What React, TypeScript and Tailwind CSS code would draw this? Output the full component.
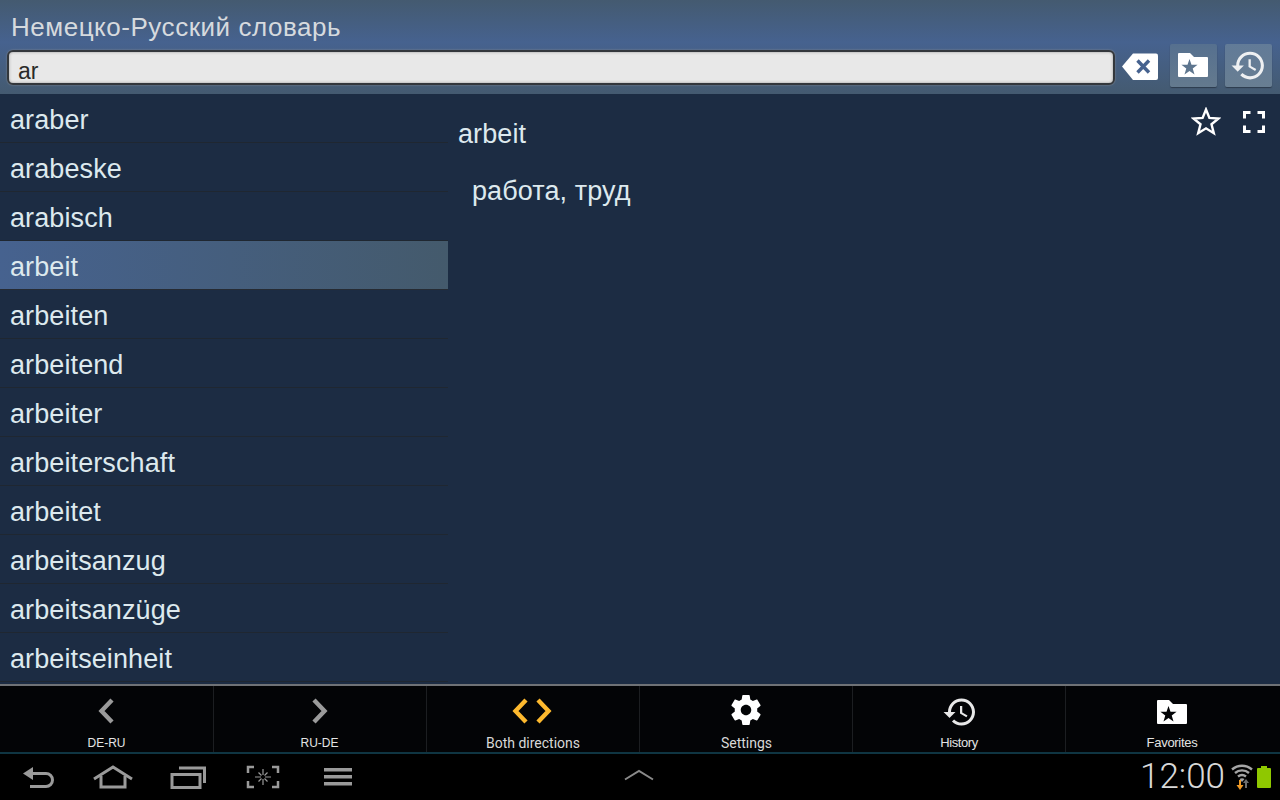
const HISTORY = "M13 3c-4.97 0-9 4.03-9 9H1l3.89 3.89.07.14L9 12H6c0-3.87 3.13-7 7-7s7 3.13 7 7-3.13 7-7 7c-1.93 0-3.68-.79-4.94-2.06l-1.42 1.42C8.27 19.99 10.51 21 13 21c4.97 0 9-4.03 9-9s-4.03-9-9-9zm-1 5v5l4.28 2.54.72-1.21-3.5-2.08V8H12z"
const GEAR = "M19.43 12.98c.04-.32.07-.64.07-.98s-.03-.66-.07-.98l2.11-1.65c.19-.15.24-.42.12-.64l-2-3.46c-.12-.22-.39-.3-.61-.22l-2.49 1c-.52-.4-1.08-.73-1.69-.98l-.38-2.65C14.46 2.18 14.25 2 14 2h-4c-.25 0-.46.18-.49.42l-.38 2.65c-.61.25-1.17.59-1.69.98l-2.49-1c-.23-.09-.49 0-.61.22l-2 3.46c-.13.22-.07.49.12.64l2.11 1.65c-.04.32-.07.65-.07.98s.03.66.07.98l-2.11 1.65c-.19.15-.24.42-.12.64l2 3.46c.12.22.39.3.61.22l2.49-1c.52.4 1.08.73 1.69.98l.38 2.65c.03.24.24.42.49.42h4c.25 0 .46-.18.49-.42l.38-2.65c.61-.25 1.17-.59 1.69-.98l2.49 1c.23.09.49 0 .61-.22l2-3.46c.12-.22.07-.49-.12-.64l-2.11-1.65zM12 15.5c-1.93 0-3.5-1.57-3.5-3.5s1.57-3.5 3.5-3.5 3.5 1.57 3.5 3.5-1.57 3.5-3.5 3.5z"
const FOLDER_STAR = "M1 0h11l4 4h13a1 1 0 0 1 1 1v18a1 1 0 0 1-1 1H1a1 1 0 0 1-1-1V1a1 1 0 0 1 1-1zM11.500 6L13.500 11.750 19.580 11.870 14.730 15.550 16.500 21.380 11.500 17.900 6.500 21.380 8.270 15.550 3.420 11.870 9.500 11.750z"

const words = ["araber", "arabeske", "arabisch", "arbeit", "arbeiten", "arbeitend", "arbeiter", "arbeiterschaft", "arbeitet", "arbeitsanzug", "arbeitsanzüge", "arbeitseinheit"]

function History({ className }: { className: string }) {
  return (
    <svg viewBox="0 0 24 24" className={className} fill="currentColor">
      <path d={HISTORY} />
    </svg>
  )
}

function FolderStar({ className }: { className: string }) {
  return (
    <svg viewBox="0 0 30 24" className={className} fill="currentColor" fillRule="evenodd">
      <path d={FOLDER_STAR} />
    </svg>
  )
}

function Tab({ children, label, labelClass }: { children: React.ReactNode, label: string, labelClass: string }) {
  return (
    <div className="w-[213px] first:w-[214px] last:w-[214px] flex flex-col items-center border-r border-[#1c1e21] last:border-r-0 h-[66px] overflow-hidden">
      <div className="h-[48px] flex items-center justify-center">{children}</div>
      <div className={labelClass}>{label}</div>
    </div>
  )
}

function App() {
  return (
    <div className="w-[1280px] h-[800px] flex flex-col overflow-hidden bg-[#1c2c43] font-['Liberation_Sans',sans-serif]">
      {/* title + search */}
      <div className="h-[94px] shrink-0 bg-gradient-to-b from-[#445a70] via-[#46628f] via-45% to-[#445a70] pl-[7px] pr-[8px]">
        <div className="h-[44px] pt-[11px] pl-[4px] text-[26px] leading-[32px] text-[#d6dade] tracking-[0.53px]">
          Немецко-Русский словарь
        </div>
        <div className="flex items-start">
          <div className="mt-[6px] w-[1108px] h-[35px] rounded-[6px] border-2 border-[#33373c] bg-[#e8e8e8] pl-[9px] text-[23px] leading-[38px] text-[#2a2a2a] shadow-[0_0_2px_#8a8f95,inset_0_0_3px_#999]">
            ar
          </div>
          <svg viewBox="0 0 36 27" className="w-[36px] h-[27px] ml-[7px] mt-[9px]" fillRule="evenodd">
            <path fill="#fff" d="M0 13.5L11 .5H34a2 2 0 0 1 2 2V25a2 2 0 0 1-2 2H11z" />
            <path stroke="#46628f" strokeWidth="3.4" d="M15.5 7.5l11.5 12M27 7.5l-11.5 12" />
          </svg>
          <div className="ml-[12px] w-[47px] h-[43px] rounded-[2px] bg-gradient-to-b from-[#56708f] to-[#647a8e] shadow-[0_1px_1px_#2d3b4d] flex items-center justify-center text-white">
            <FolderStar className="w-[30px] h-[24px] -mt-[1px] -ml-[1px]" />
          </div>
          <div className="ml-[8px] w-[47px] h-[43px] rounded-[2px] bg-gradient-to-b from-[#627b98] to-[#687e92] shadow-[0_1px_1px_#2d3b4d] flex items-center justify-center text-[#eef0f2]">
            <History className="w-[37px] h-[37px]" />
          </div>
        </div>
      </div>

      {/* list + article */}
      <div className="flex h-[590px] shrink-0">
        <div className="w-[448px] shrink-0">
          {words.map((word) => (
            <div
              key={word}
              className={`h-[49px] pl-[10px] text-[27px] tracking-[0.1px] leading-[52px] text-[#dde9ee] border-b ${word === "arbeit" ? "border-[#262b33] bg-gradient-to-r from-[#46628f] to-[#445a6c]" : "border-[#1f2731]"}`}
            >
              {word}
            </div>
          ))}
        </div>
        <div className="flex-1 relative pl-[10px] text-[27px] tracking-[0.1px] text-[#dde9ee]">
          <div className="pt-[24px] leading-[32px]">arbeit</div>
          <div className="pt-[25px] pl-[14px] leading-[32px]">работа, труд</div>
          <div className="absolute top-[13px] right-[15px] flex items-center gap-[22px]">
            <svg viewBox="0 0 30 29" className="w-[30px] h-[29px]" fill="none" stroke="#fff" strokeWidth="2.4" strokeLinejoin="miter">
              <path d="M15 2.5l3.4 8.4 9.2.6-7.1 5.8 2.3 8.9-7.8-4.9-7.8 4.9 2.3-8.9-7.1-5.8 9.2-.6z" />
            </svg>
            <svg viewBox="0 0 22 22" className="w-[22px] h-[22px]" fill="none" stroke="#fff" strokeWidth="3">
              <path d="M1.5 7.5v-6h6M14.5 1.5h6v6M20.5 14.5v6h-6M7.5 20.5h-6v-6" />
            </svg>
          </div>
        </div>
      </div>

      {/* mode bar */}
      <div className="h-[70px] shrink-0 border-t-2 border-[#6f7276] border-b-2 border-b-[#0f3542] bg-[#030406] flex">
        <Tab label="DE-RU" labelClass="text-[12px] leading-[14px] pt-[2px] text-[#e4e4e4]">
          <svg viewBox="0 0 16 26" className="w-[16px] h-[26px] mt-[2px] -ml-[1px]" fill="none" stroke="#9b9b9b" strokeWidth="4.4">
            <path d="M14 2L3.5 13 14 24" />
          </svg>
        </Tab>
        <Tab label="RU-DE" labelClass="text-[12px] leading-[14px] pt-[2px] -ml-[1px] text-[#e4e4e4]">
          <svg viewBox="0 0 16 26" className="w-[16px] h-[26px] mt-[2px]" fill="none" stroke="#9b9b9b" strokeWidth="4.4">
            <path d="M2 2l10.500 11L2 24" />
          </svg>
        </Tab>
        <Tab label="Both directions" labelClass="text-[14px] leading-[16px] pt-[1px] text-[#d8d8d8] font-['Roboto',sans-serif]">
          <svg viewBox="0 0 42 26" className="w-[42px] h-[26px] mt-[2px] -ml-[2px]" fill="none" stroke="#fdb92e" strokeWidth="4.4">
            <path d="M15 2L4.500 13 15 24M27 2l10.500 11L27 24" />
          </svg>
        </Tab>
        <Tab label="Settings" labelClass="text-[14px] leading-[16px] pt-[1px] ml-[1px] text-[#d8d8d8] font-['Roboto',sans-serif]">
          <svg viewBox="0 0 24 24" className="w-[36px] h-[36px] -mt-[1px] text-white" fill="currentColor">
            <path d={GEAR} />
          </svg>
        </Tab>
        <Tab label="History" labelClass="text-[13px] leading-[16px] pt-[1px] tracking-[-0.4px] text-[#e4e4e4]">
          <History className="w-[36px] h-[36px] mt-[3px] ml-[2px] text-[#e8e8e8]" />
        </Tab>
        <Tab label="Favorites" labelClass="text-[13px] leading-[16px] pt-[1px] -ml-[2px] tracking-[-0.3px] text-[#e4e4e4]">
          <FolderStar className="w-[30px] h-[24px] mt-[3px] -ml-[2px] text-white" />
        </Tab>
      </div>

      {/* system bar */}
      <div className="flex-1 bg-black flex items-center relative">
        <div className="flex items-center pl-[23px] w-[400px]">
          <svg viewBox="0 0 32 22" className="w-[32px] h-[22px]" fill="none" stroke="#9a9a9a" strokeWidth="3">
            <path d="M4 7.500h19a6.500 6.500 0 0 1 0 13H7" />
            <path fill="#9a9a9a" stroke="none" d="M0 7.500L10 1v13z" />
          </svg>
          <svg viewBox="0 0 40 24" className="w-[40px] h-[24px] ml-[38px]" fill="none" stroke="#9a9a9a" strokeWidth="3">
            <path d="M1 14L20 2l19 12" />
            <path d="M8 11v11h24V11" />
          </svg>
          <svg viewBox="0 0 36 24" className="w-[36px] h-[24px] ml-[37px]" fill="none" stroke="#9a9a9a" strokeWidth="3">
            <path d="M2 9.500h28v13H2z" />
            <path d="M9 3h25.500v15" />
          </svg>
          <svg viewBox="0 0 34 24" className="w-[34px] h-[24px] ml-[40px]" fill="none" stroke="#9a9a9a" strokeWidth="2.500">
            <path d="M8 2H2v6M26 2h6v6M8 22H2v-6M26 22h6v-6" />
            <path strokeWidth="1.200" d="M17 4v6M17 14v6M9 12h6M19 12h6M12.500 7.500l3 3M18.500 13.500l3 3M12.500 16.500l3-3M18.500 10.500l3-3" />
          </svg>
          <svg viewBox="0 0 28 18" className="w-[28px] h-[18px] ml-[44px]" fill="#9a9a9a">
            <path d="M0 0h28v3.500H0zM0 7h28v3.500H0zM0 14h28v3.500H0z" />
          </svg>
        </div>
        <svg viewBox="0 0 30 12" className="absolute left-[624px] top-[15px] w-[30px] h-[12px]" fill="none" stroke="#8a8a8a" strokeWidth="2">
          <path d="M1 10.500L15 2l14 8.500" />
        </svg>
        <div className="ml-auto flex items-center pr-[9px]">
          <span className="text-[35px] leading-[46px] font-light text-[#d8d8d8] font-['Roboto',sans-serif]">12:00</span>
          <svg viewBox="0 0 22 26" className="w-[22px] h-[26px] ml-[6px]">
            <path fill="none" stroke="#a5a5a5" strokeWidth="2.4" d="M1 5.500c6-5 14-5 20 0M4 9c4-3.500 10-3.500 14 0M7 12.500c2.500-2 5.500-2 8 0" />
            <path fill="#a5a5a5" d="M8.500 15c1.500-1 3.500-1 5 0L11 18z" />
            <path fill="none" stroke="#f09a25" strokeWidth="2" d="M9 16v8" />
            <path fill="#f09a25" d="M5.500 21h7L9 26z" />
            <path fill="none" stroke="#6e6e6e" strokeWidth="2" d="M15 18v6" />
            <path fill="#6e6e6e" d="M12 19l3-4 3 4z" />
          </svg>
          <svg viewBox="0 0 14 22" className="w-[14px] h-[22px] ml-[4px]" fill="#8fc800">
            <path d="M4 0h6v2h3a1 1 0 0 1 1 1v18a1 1 0 0 1-1 1H1a1 1 0 0 1-1-1V3a1 1 0 0 1 1-1h3z" />
          </svg>
        </div>
      </div>
    </div>
  )
}

export default App
